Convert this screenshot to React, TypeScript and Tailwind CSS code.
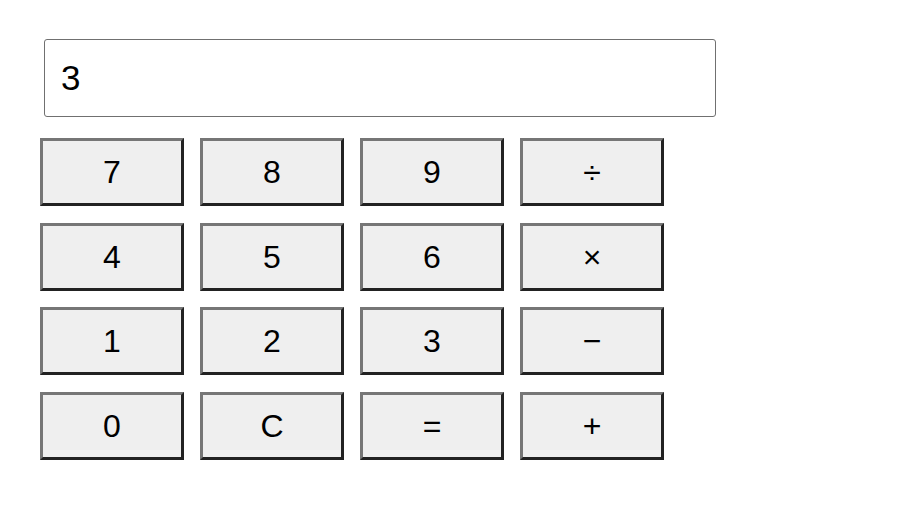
const keys = ["7", "8", "9", "÷", "4", "5", "6", "×", "1", "2", "3", "−", "0", "C", "=", "+"]

export default function App() {
  return (
    <div
      className="min-h-[516px] w-[924px] bg-white pl-[40px] pt-[39px]"
      style={{ fontFamily: '"Liberation Sans", Arial, sans-serif' }}
    >
      <input
        readOnly
        value="3"
        className="ml-[4px] block h-[78px] w-[672px] rounded-[3px] border-[1.5px] border-[#707070] bg-white pl-[16px] text-[35px] text-black outline-none"
      />
      <div className="mt-[21px] grid w-max grid-cols-[repeat(4,144px)] gap-x-[16px] gap-y-[16.7px]">
        {keys.map((k) => (
          <button
            key={k}
            className="flex h-[68px] items-center justify-center border-[3px] border-t-[#767676] border-l-[#767676] border-b-[#222] border-r-[#222] bg-[#efefef] text-[32px] text-black"
          >
            {k}
          </button>
        ))}
      </div>
    </div>
  )
}
